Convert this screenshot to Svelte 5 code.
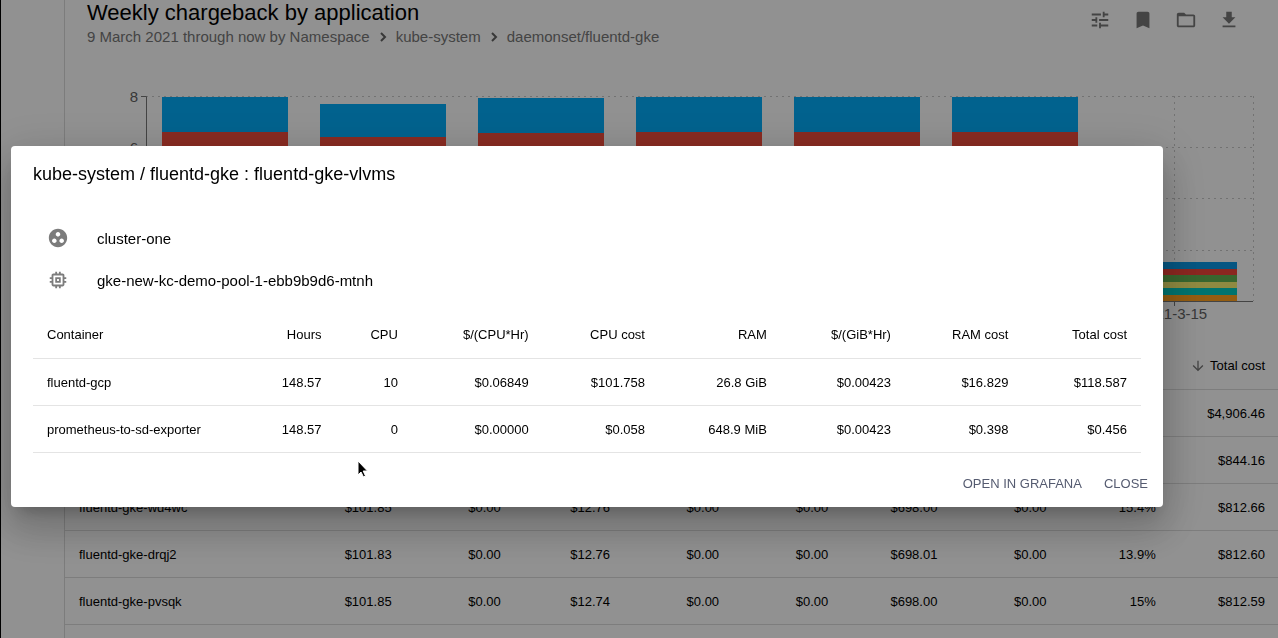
<script>
    const bars = [
        {top: 97, red: 132},
        {top: 104, red: 137},
        {top: 98, red: 133},
        {top: 97, red: 132},
        {top: 97, red: 132},
        {top: 97, red: 132}
    ]
    const lastBar = ['#0b95e0', '#f04438', '#62b050', '#f6ee70', '#00c8c0', '#ffa01e']

    const usage = [
        {name: '', values: ['', '', '', '', '', '', '', '', '$4,906.46']},
        {name: '', values: ['', '', '', '', '', '', '', '', '$844.16']},
        {name: 'fluentd-gke-wd4wc', values: ['$101.85', '$0.00', '$12.76', '$0.00', '$0.00', '$698.00', '$0.00', '15.4%', '$812.66']},
        {name: 'fluentd-gke-drqj2', values: ['$101.83', '$0.00', '$12.76', '$0.00', '$0.00', '$698.01', '$0.00', '13.9%', '$812.60']},
        {name: 'fluentd-gke-pvsqk', values: ['$101.85', '$0.00', '$12.74', '$0.00', '$0.00', '$698.00', '$0.00', '15%', '$812.59']}
    ]

    const columns = [
        {label: 'Container', width: 20},
        {label: 'Hours', width: 7.3},
        {label: 'CPU', width: 6.9},
        {label: '$/(CPU*Hr)', width: 11.8},
        {label: 'CPU cost', width: 10.5},
        {label: 'RAM', width: 11},
        {label: '$/(GiB*Hr)', width: 11.2},
        {label: 'RAM cost', width: 10.6},
        {label: 'Total cost', width: 10.7}
    ]
    const containers = [
        ['fluentd-gcp', '148.57', '10', '$0.06849', '$101.758', '26.8 GiB', '$0.00423', '$16.829', '$118.587'],
        ['prometheus-to-sd-exporter', '148.57', '0', '$0.00000', '$0.058', '648.9 MiB', '$0.00423', '$0.398', '$0.456']
    ]

    const tools = [
        {label: 'Filters', path: 'M3 17v2h6v-2H3zM3 5v2h10V5H3zm10 16v-2h8v-2h-8v-2h-2v6h2zM7 9v2H3v2h4v2h2V9H7zm14 4v-2H11v2h10zm-6-4h2V7h4V5h-4V3h-2v6z'},
        {label: 'Save report', path: 'M17 3H7c-1.1 0-2 .9-2 2v16l7-3 7 3V5c0-1.1-.9-2-2-2z'},
        {label: 'Open report', path: 'M20 6h-8l-2-2H4c-1.1 0-1.99.9-1.99 2L2 18c0 1.1.9 2 2 2h16c1.1 0 2-.9 2-2V8c0-1.1-.9-2-2-2zm0 12H4V8h16v10z'},
        {label: 'Download', path: 'M19 9h-4V3H9v6H5l7 7 7-7zM5 18v2h14v-2H5z'}
    ]

    let open = $state(true)
</script>

<div class="page">
    <aside></aside>
    <main>
        <header>
            <div>
                <h1>Weekly chargeback by application</h1>
                <nav>
                    <a href="#namespace">9 March 2021 through now by Namespace</a>
                    <svg viewBox="0 0 8 12"><path d="M2 2l4 4-4 4" /></svg>
                    <a href="#kube-system">kube-system</a>
                    <svg viewBox="0 0 8 12"><path d="M2 2l4 4-4 4" /></svg>
                    <a href="#fluentd-gke">daemonset/fluentd-gke</a>
                </nav>
            </div>
            <div class="tools">
                {#each tools as tool}
                    <button type="button" aria-label={tool.label}>
                        <svg viewBox="0 0 24 24"><path d={tool.path} /></svg>
                    </button>
                {/each}
            </div>
        </header>

        <svg class="chart" viewBox="0 0 1213 282">
            <g class="grid">
                {#each [36, 87, 138, 190] as y}
                    <path d="M81 {y}.5H1188" />
                {/each}
                <path d="M1109.5 36V241M1188.5 36V241" />
            </g>
            {#each bars as bar, i}
                <rect x={97 + i * 158} y={bar.top - 60} width="126" height={301 - bar.top} fill="#03a9f4" />
                <rect x={97 + i * 158} y={bar.red - 60} width="126" height={301 - bar.red} fill="#ec4a3a" />
            {/each}
            {#each lastBar as color, i}
                <rect x="1045" y={202 + i * 6.5} width="127" height="6.5" fill={color} />
            {/each}
            <path class="axis" d="M76 36.5H81.5V241.5H1188M76 87.5H81M1109.5 241V246" />
            <text x="73" y="42" text-anchor="end">8</text>
            <text x="73" y="93" text-anchor="end">6</text>
            <text x="1108" y="259" text-anchor="middle">2021-3-15</text>
        </svg>

        <table class="usage">
            <thead>
                <tr>
                    <th></th>
                    {#each Array(8) as _}
                        <th></th>
                    {/each}
                    <th>
                        <span class="sorted">
                            <svg viewBox="0 0 24 24"><path d="M20 12l-1.41-1.41L13 16.17V4h-2v12.17l-5.58-5.59L4 12l8 8 8-8z" /></svg>
                            Total cost
                        </span>
                    </th>
                </tr>
            </thead>
            <tbody>
                {#each usage as row}
                    <tr>
                        <td>{row.name}</td>
                        {#each row.values as value}
                            <td>{value}</td>
                        {/each}
                    </tr>
                {/each}
            </tbody>
        </table>
    </main>
</div>

{#if open}
    <div class="backdrop">
        <div class="dialog" role="dialog" aria-labelledby="dialog-title">
            <h2 id="dialog-title">kube-system / fluentd-gke : fluentd-gke-vlvms</h2>
            <div class="content">
                <ul>
                    <li>
                        <svg viewBox="0 0 24 24"><path d="M12 2C6.48 2 2 6.48 2 12s4.48 10 10 10 10-4.48 10-10S17.52 2 12 2zM8 17.5c-1.38 0-2.5-1.12-2.5-2.5s1.12-2.5 2.5-2.5 2.5 1.12 2.5 2.5-1.12 2.5-2.5 2.5zM9.5 8c0-1.38 1.12-2.5 2.5-2.5s2.5 1.12 2.5 2.5-1.12 2.5-2.5 2.5S9.5 9.38 9.5 8zm6.5 9.5c-1.38 0-2.5-1.12-2.5-2.5s1.12-2.5 2.5-2.5 2.5 1.12 2.5 2.5-1.12 2.5-2.5 2.5z" /></svg>
                        cluster-one
                    </li>
                    <li>
                        <svg viewBox="0 0 24 24"><path d="M15 9H9v6h6V9zm-2 4h-2v-2h2v2zm8-2V9h-2V7c0-1.1-.9-2-2-2h-2V3h-2v2h-2V3H9v2H7c-1.1 0-2 .9-2 2v2H3v2h2v2H3v2h2v2c0 1.1.9 2 2 2h2v2h2v-2h2v2h2v-2h2c1.1 0 2-.9 2-2v-2h2v-2h-2v-2h2zm-4 6H7V7h10v10z" /></svg>
                        gke-new-kc-demo-pool-1-ebb9b9d6-mtnh
                    </li>
                </ul>
                <table class="containers">
                    <colgroup>
                        {#each columns as column}
                            <col style="width: {column.width}%">
                        {/each}
                    </colgroup>
                    <thead>
                        <tr>
                            {#each columns as column}
                                <th>{column.label}</th>
                            {/each}
                        </tr>
                    </thead>
                    <tbody>
                        {#each containers as row}
                            <tr>
                                {#each row as value}
                                    <td>{value}</td>
                                {/each}
                            </tr>
                        {/each}
                    </tbody>
                </table>
            </div>
            <div class="actions">
                <button type="button">OPEN IN GRAFANA</button>
                <button type="button" onclick={() => open = false}>CLOSE</button>
            </div>
        </div>
    </div>
{/if}

<svg class="cursor" viewBox="0 0 12 18"><path d="M1 1v14l3-3 2.5 5 2-1-2.3-5H10.5z" /></svg>

<style>
    :global(body){
        background: #fafafa;
        font-family: "Liberation Sans", Arial, sans-serif;
        font-size: 13px;
        color: #000;
    }

    .page{
        display: flex;
        min-height: 100vh;
        border-left: 1px solid #000;
        box-sizing: border-box;
    }

    aside{
        width: 64px;
        flex: none;
        border-right: 1px solid #d6d6d6;
        box-sizing: border-box;
    }

    main{
        flex: 1;
        min-width: 0;
    }

    header{
        height: 60px;
        display: flex;
        justify-content: space-between;
        padding: 0 38px 0 22px;
        box-sizing: border-box;
    }

    h1{
        margin: 0;
        font-size: 22px;
        line-height: 26px;
        font-weight: normal;
    }

    nav{
        display: flex;
        align-items: center;
        gap: 9px;
        font-size: 15px;
        line-height: 22px;
    }

    nav a{
        color: #757575;
        text-decoration: none;
    }

    nav svg{
        width: 8px;
        height: 12px;
        fill: none;
        stroke: #616161;
        stroke-width: 2;
    }

    .tools{
        display: flex;
        gap: 21px;
        padding-top: 9px;
    }

    button{
        border: 0;
        padding: 0;
        background: none;
        font: inherit;
        cursor: pointer;
    }

    .tools button{
        width: 22px;
        height: 22px;
    }

    .tools svg{
        display: block;
        fill: #757575;
    }

    .chart{
        display: block;
        width: 100%;
    }

    .chart rect{
        shape-rendering: crispEdges;
    }

    .chart text{
        font-size: 15px;
        fill: #616161;
    }

    .grid path{
        fill: none;
        stroke: #c4c4c4;
        stroke-dasharray: 2 4;
    }

    .axis{
        fill: none;
        stroke: #757575;
    }

    table{
        width: 100%;
        table-layout: fixed;
        border-collapse: separate;
        border-spacing: 0;
    }

    th, td{
        height: 47px;
        padding: 0 14px;
        border-bottom: 1px solid #e4e4e4;
        box-sizing: border-box;
        text-align: right;
        font-weight: normal;
        white-space: nowrap;
    }

    th{
        height: 48px;
    }

    th:first-child, td:first-child{
        text-align: left;
    }

    .usage th, .usage td{
        padding: 0 13px 0 14px;
        border-color: #d8d8d8;
    }

    .usage th{
        width: 9%;
    }

    .usage th:first-child{
        width: 19%;
    }

    .sorted{
        display: flex;
        align-items: center;
        justify-content: flex-end;
        gap: 4px;
    }

    .sorted svg{
        width: 16px;
        height: 16px;
        flex: none;
        fill: #757575;
    }

    .backdrop{
        position: fixed;
        inset: 0;
        display: flex;
        align-items: center;
        padding: 15px 115px 0 11px;
        background: rgba(0, 0, 0, 0.42);
    }

    .dialog{
        flex: 1;
        border-radius: 4px;
        background: #fff;
        box-shadow: 0 11px 15px -7px rgba(0, 0, 0, 0.2), 0 24px 38px 3px rgba(0, 0, 0, 0.14), 0 9px 46px 8px rgba(0, 0, 0, 0.12);
    }

    h2{
        margin: 0;
        padding: 14px 22px;
        font-size: 18px;
        line-height: 28px;
        font-weight: normal;
    }

    .content{
        padding: 15px 22px 7px;
    }

    ul{
        list-style: none;
        margin: 0 0 10px;
        padding: 0 14px;
    }

    li{
        height: 42px;
        display: flex;
        align-items: center;
        gap: 28px;
        font-size: 15px;
    }

    li svg{
        width: 22px;
        height: 22px;
        fill: #7c7c7c;
    }

    .actions{
        display: flex;
        justify-content: flex-end;
        gap: 6px;
        padding: 7px;
    }

    .actions button{
        height: 33px;
        padding: 0 8px;
        color: #555b70;
    }

    .cursor{
        position: fixed;
        left: 357px;
        top: 460px;
        width: 12px;
        height: 18px;
        stroke: #fff;
        pointer-events: none;
    }
</style>
